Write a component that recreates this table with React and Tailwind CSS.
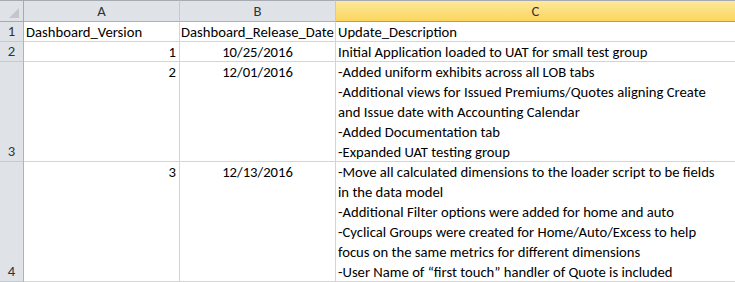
const rows = [
  { n: "1", h: "h-[20px]", a: "Dashboard_Version", aLeft: true, b: "Dashboard_Release_Date", bLeft: true, c: ["Update_Description"] },
  { n: "2", h: "h-[20px]", a: "1", b: "10/25/2016", c: ["Initial Application loaded to UAT for small test group"] },
  {
    n: "3",
    h: "h-[100px]",
    a: "2",
    b: "12/01/2016",
    c: [
      "-Added uniform exhibits across all LOB tabs",
      "-Additional views for Issued Premiums/Quotes aligning Create",
      "and Issue date with Accounting Calendar",
      "-Added Documentation tab",
      "-Expanded UAT testing group",
    ],
  },
  {
    n: "4",
    h: "h-[120px]",
    a: "3",
    b: "12/13/2016",
    c: [
      "-Move all calculated dimensions to the loader script to be fields",
      "in the data model",
      "-Additional Filter options were added for home and auto",
      "-Cyclical Groups were created for Home/Auto/Excess to help",
      "focus on the same metrics for different dimensions",
      "-User Name of \u201cfirst touch\u201d handler of Quote is included",
    ],
  },
];

const cell = "border-r border-b border-[#d4d4d4] overflow-hidden whitespace-nowrap leading-[20px]";

export default function App() {
  return (
    <div className="w-[735px] h-[282px] overflow-hidden bg-white font-['Carlito','Lato',sans-serif] text-[14.67px] text-black">
      <div className="grid grid-cols-[24px_156px_156px_1fr]">
        {/* Column headers */}
        <div className="h-[22px] border-t border-[#a5abb3] border-r border-b bg-[#dfe3e8] flex items-end justify-end pr-[4px] pb-[3px]">
          <svg width="10" height="10" viewBox="0 0 10 10">
            <polygon points="10,0 10,10 0,10" fill="#c3c7cc" />
          </svg>
        </div>
        <div className="h-[22px] border-t border-[#a5abb3] border-r border-r-[#c5cad0] border-b border-b-[#abb2ba] bg-[#dfe3e8] flex items-center justify-center text-[#333]">
          A
        </div>
        <div className="h-[22px] border-t border-[#a5abb3] border-r border-r-[#c5cad0] border-b border-b-[#abb2ba] bg-[#dfe3e8] flex items-center justify-center text-[#333]">
          B
        </div>
        <div className="h-[22px] border-t border-[#a5abb3] border-b border-b-[#c29a3f] bg-gradient-to-b from-[#fee89a] to-[#fbd55c] flex items-center justify-center text-[#333]">
          C
        </div>

        {rows.map((r) => (
          <div key={r.n} className="contents">
            <div className={`${r.h} border-r border-b border-r-[#abb2ba] border-b-[#c5cad0] bg-[#dfe3e8] flex items-end justify-center leading-[20px] text-[#333]`}>
              {r.n}
            </div>
            <div className={`${r.h} ${cell} ${r.aLeft ? "text-left pl-[2px]" : "text-right pr-[3px]"}`}>{r.a}</div>
            <div className={`${r.h} ${cell} ${r.bLeft ? "text-left pl-[1px]" : "text-center"}`}>{r.b}</div>
            <div className={`${r.h} border-b border-[#d4d4d4] overflow-hidden whitespace-nowrap leading-[20px] pl-[2px]`}>
              {r.c.map((t, i) => (
                <div key={i}>{t}</div>
              ))}
            </div>
          </div>
        ))}
      </div>
    </div>
  );
}
